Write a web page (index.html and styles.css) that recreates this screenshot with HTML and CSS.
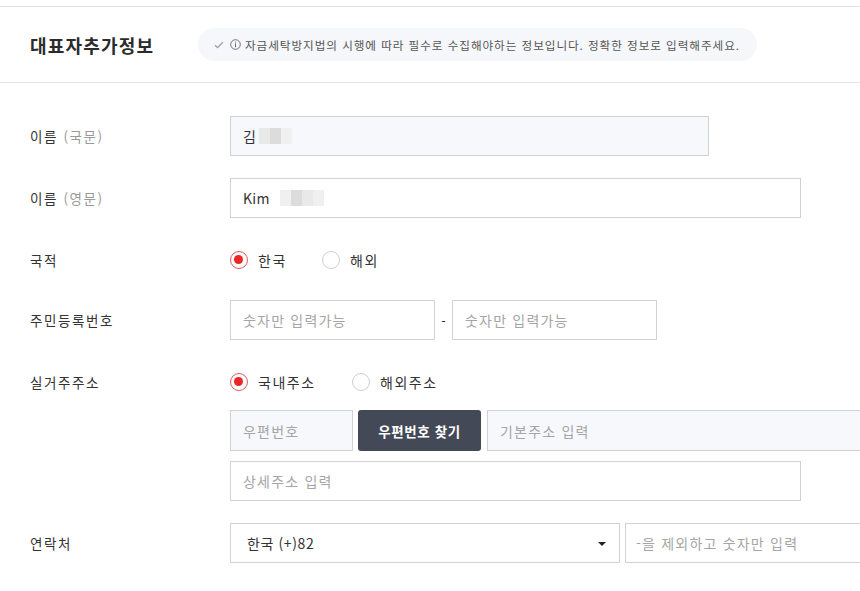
FILE: index.html
```html
<!DOCTYPE html>
<html lang="ko">
<head>
<meta charset="utf-8">
<link rel="stylesheet" href="styles.css">
</head>
<body>
<div class="page">
  <header class="head">
    <h2 class="title">대표자추가정보</h2>
    <div class="notice">
      <svg class="ico-check" width="10" height="8" viewBox="0 0 10 8"><path d="M1 4.2 L3.6 6.6 L8.8 1.2" fill="none" stroke="#9a9fa8" stroke-width="1.3"/></svg>
      <svg class="ico-info" width="11" height="11" viewBox="0 0 11 11"><circle cx="5.5" cy="5.5" r="4.8" fill="none" stroke="#666" stroke-width="0.9"/><path d="M5.5 4.4 V8.2" stroke="#666" stroke-width="1"/><circle cx="5.5" cy="3" r="0.6" fill="#666"/></svg>
      <span>자금세탁방지법의 시행에 따라 필수로 수집해야하는 정보입니다. 정확한 정보로 입력해주세요.</span>
    </div>
  </header>

  <div class="form">
    <div class="row">
      <div class="label">이름 <span class="sub">(국문)</span></div>
      <div class="field">
        <div class="input filled w479">김<span class="blur"><i class="b1"></i><i class="b2"></i><i class="b3"></i></span></div>
      </div>
    </div>

    <div class="row">
      <div class="label">이름 <span class="sub">(영문)</span></div>
      <div class="field">
        <div class="input w571 latin">Kim<span class="blur gapl"><i class="b3"></i><i class="b2"></i><i class="b1"></i><i class="b3"></i></span></div>
      </div>
    </div>

    <div class="row row-tight">
      <div class="label">국적</div>
      <div class="field">
        <div class="radios">
          <label class="radio on r1"><span class="dot"></span>한국</label>
          <label class="radio"><span class="dot"></span>해외</label>
        </div>
      </div>
    </div>

    <div class="row">
      <div class="label">주민등록번호</div>
      <div class="field">
        <div class="line">
          <div class="input ph w205">숫자만 입력가능</div>
          <span class="dash">-</span>
          <div class="input ph w205">숫자만 입력가능</div>
        </div>
      </div>
    </div>

    <div class="row">
      <div class="label">실거주주소</div>
      <div class="field">
        <div class="radios">
          <label class="radio on r2"><span class="dot"></span>국내주소</label>
          <label class="radio"><span class="dot"></span>해외주소</label>
        </div>
        <div class="line addr1">
          <div class="input filled ph w123">우편번호</div>
          <button class="btn">우편번호 찾기</button>
          <div class="input filled ph grow">기본주소 입력</div>
        </div>
        <div class="line addr2">
          <div class="input ph w571">상세주소 입력</div>
        </div>
      </div>
    </div>

    <div class="row row-contact">
      <div class="label">연락처</div>
      <div class="field">
        <div class="line">
          <div class="select">한국 (+)82<span class="caret"></span></div>
          <div class="input ph phone grow">-을 제외하고 숫자만 입력</div>
        </div>
      </div>
    </div>
  </div>
</div>
</body>
</html>
```

FILE: styles.css
```css
* { box-sizing: border-box; }
html, body { margin: 0; padding: 0; background: #fff; overflow: hidden; }
body {
  font-family: "Noto Sans CJK KR", "Noto Sans", "Liberation Sans", sans-serif;
  color: #333;
  font-size: 14px;
}
.page { padding-top: 6px; width: 900px; }

.head {
  border-top: 1px solid #e4e4e4;
  border-bottom: 1px solid #e4e4e4;
  height: 77px;
  display: flex;
  align-items: center;
  padding: 0 30px;
}
.title {
  margin: 0;
  font-size: 18px;
  font-weight: 700;
  color: #2b2b2b;
  width: 168px;
  letter-spacing: 1.2px;
}
.notice {
  height: 33px;
  border-radius: 17px;
  background: #f5f7fa;
  display: flex;
  align-items: center;
  padding: 0 10px 0 16px;
  font-size: 11.6px;
  letter-spacing: 0.95px;
  color: #555;
  width: 559px;
  white-space: nowrap;
}
.ico-check { margin-right: 6px; flex: none; }
.ico-info { margin-right: 4px; flex: none; }

.form { padding: 33px 0 0 30px; }
.row { display: flex; align-items: flex-start; margin-bottom: 22px; }
.row-tight { margin-bottom: 20px; }
.label {
  width: 200px;
  flex: none;
  height: 40px;
  line-height: 40px;
  font-size: 13.5px;
  letter-spacing: 1.6px;
  color: #333;
}
.label .sub { color: #999; }
.field { display: flex; flex-direction: column; }

.input {
  height: 40px;
  border: 1px solid #d2d2d2;
  background: #fff;
  display: flex;
  align-items: center;
  padding: 0 12px;
  font-size: 14px;
  letter-spacing: 1.2px;
  color: #333;
  flex: none;
  white-space: nowrap;
}
.input.latin { letter-spacing: 0.3px; }
.input.filled { background: #f7f8fb; }
.input.ph { color: #a5a5a5; }
.w479 { width: 479px; }
.w571 { width: 571px; }
.w205 { width: 205px; }
.w123 { width: 123px; }
.grow { width: 380px; }

.blur { display: inline-flex; margin-left: 2px; }
.blur.gapl { margin-left: 10px; }
.blur i { display: inline-block; width: 11px; height: 16px; }
.blur .b1 { background: #e9e9e9; }
.blur .b2 { background: #dcdcdc; }
.blur .b3 { background: #f0f0f0; }

.radios { display: flex; height: 40px; align-items: center; }
.radio {
  display: flex;
  align-items: center;
  font-size: 14px;
  letter-spacing: 1.5px;
  color: #333;
}
.radio.r1 { width: 92px; }
.radio.r2 { width: 122px; }
.radio .dot {
  width: 18px;
  height: 18px;
  border-radius: 50%;
  border: 1px solid #cfcfcf;
  background: #fff;
  margin-right: 10px;
  position: relative;
  flex: none;
}
.radio.on .dot { border: 1.5px solid #e05a5a; }
.radio.on .dot::after {
  content: "";
  position: absolute;
  left: 3px; top: 3px;
  width: 9px; height: 9px;
  border-radius: 50%;
  background: #ec2626;
}

.line { display: flex; align-items: center; }
.dash { width: 17px; text-align: center; font-size: 13px; color: #333; }

.addr1 { margin-top: 8px; height: 41px; }
.addr1 .input { height: 41px; }
.addr2 { margin-top: 10px; }
.btn {
  height: 41px;
  width: 123px;
  margin: 0 6px 0 5px;
  border: 0;
  border-radius: 3px;
  background: #434956;
  color: #fff;
  font-family: inherit;
  font-size: 13.5px;
  letter-spacing: 0.6px;
  font-weight: 700;
}
.row-contact { margin-top: 2px; }
.select {
  width: 390px;
  height: 40px;
  border: 1px solid #d2d2d2;
  display: flex;
  align-items: center;
  padding: 0 16px;
  font-size: 14px;
  letter-spacing: 0.6px;
  color: #333;
  position: relative;
  margin-right: 5px;
}
.caret {
  position: absolute;
  right: 13px;
  top: 18px;
  width: 0; height: 0;
  border-left: 4px solid transparent;
  border-right: 4px solid transparent;
  border-top: 4px solid #222;
}
.phone { padding-left: 10px; }
```
